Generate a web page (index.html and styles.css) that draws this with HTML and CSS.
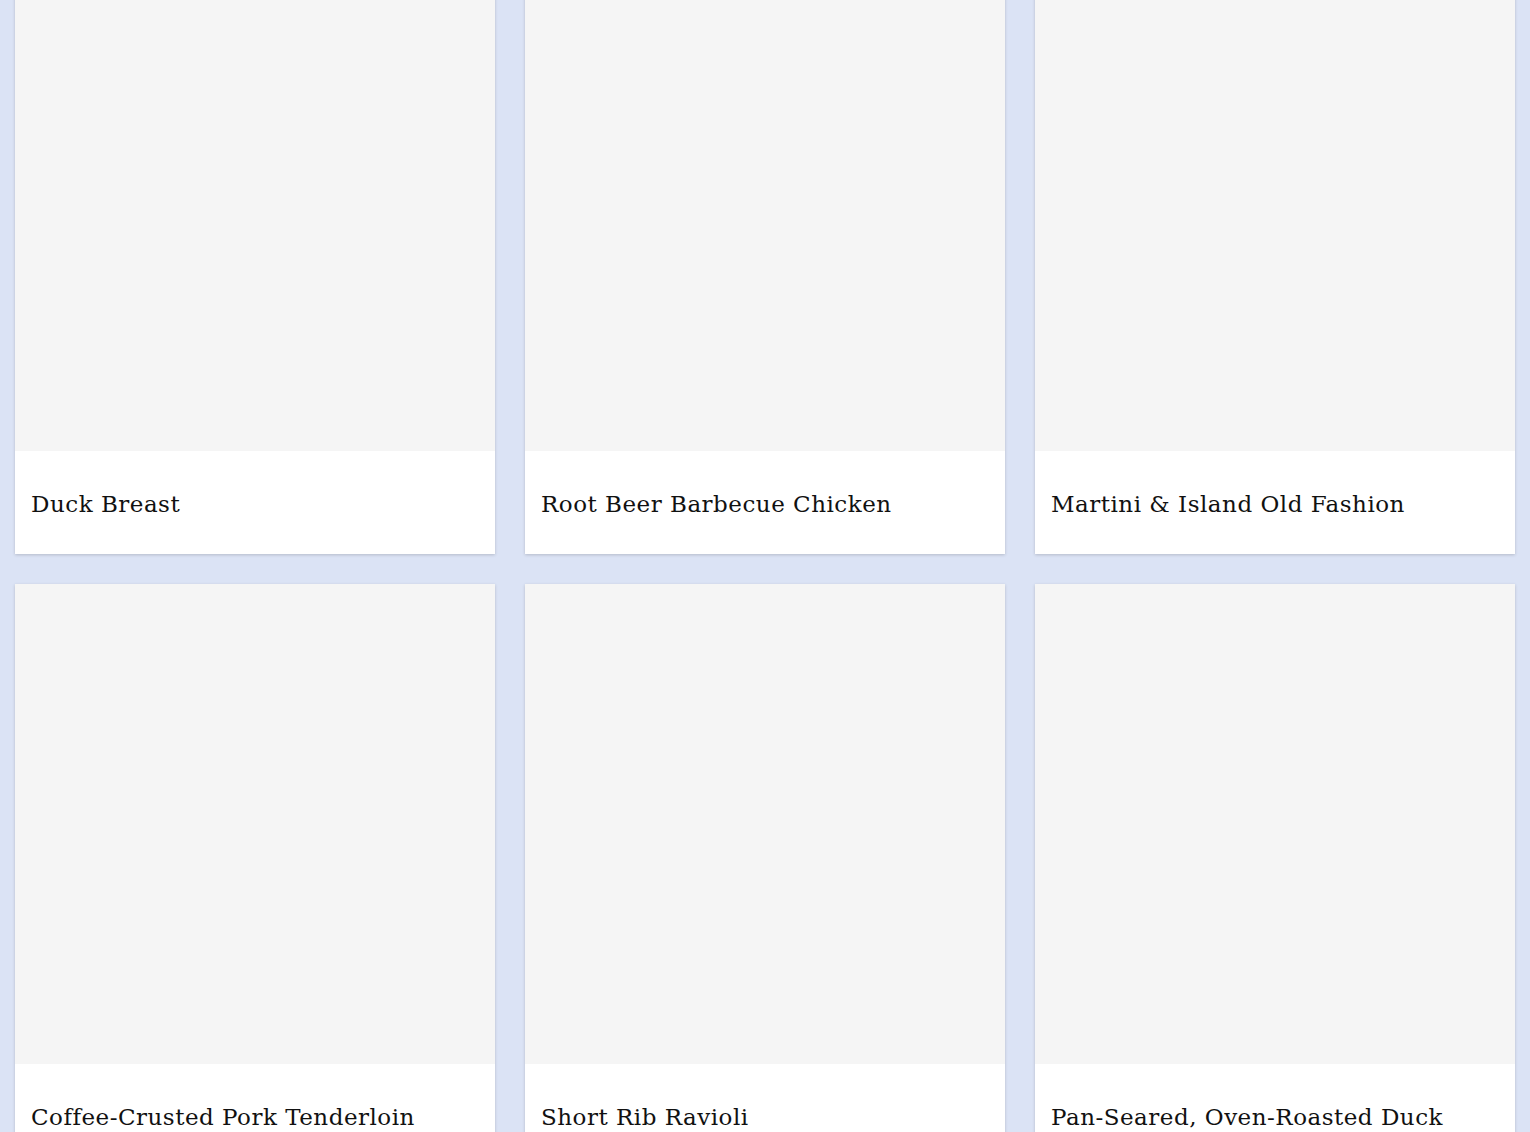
FILE: index.html
```html
<!DOCTYPE html>
<html lang="en">
<head>
<meta charset="utf-8">
<title>Recipes</title>
<link rel="stylesheet" href="styles.css">
</head>
<body>
<main class="grid">
  <article class="card"><div class="card-image"></div><div class="card-body"><h2 class="card-title">Duck Breast</h2></div></article>
  <article class="card"><div class="card-image"></div><div class="card-body"><h2 class="card-title">Root Beer Barbecue Chicken</h2></div></article>
  <article class="card"><div class="card-image"></div><div class="card-body"><h2 class="card-title">Martini &amp; Island Old Fashion</h2></div></article>
  <article class="card"><div class="card-image"></div><div class="card-body"><h2 class="card-title">Coffee-Crusted Pork Tenderloin</h2></div></article>
  <article class="card"><div class="card-image"></div><div class="card-body"><h2 class="card-title">Short Rib Ravioli</h2></div></article>
  <article class="card"><div class="card-image"></div><div class="card-body"><h2 class="card-title">Pan-Seared, Oven-Roasted Duck</h2></div></article>
</main>
</body>
</html>
```
FILE: styles.css
```css
html, body {
  margin: 0;
  padding: 0;
  background: #dbe3f5;
  overflow: hidden;
}
.grid {
  display: grid;
  grid-template-columns: repeat(3, 480px);
  gap: 30px;
  padding: 0 15px;
  margin-top: -29px;
}
.card {
  background: #fff;
  box-shadow: 0 1px 3px rgba(0, 0, 0, 0.18);
  display: flex;
  flex-direction: column;
}
.card-image {
  height: 480px;
  background: #f5f5f5;
}
.card-body {
  box-sizing: border-box;
  height: 103px;
  padding: 2px 16px 0;
  display: flex;
  align-items: center;
}
.card-title {
  margin: 0;
  font-family: "DejaVu Serif", "Liberation Serif", serif;
  font-weight: normal;
  font-size: 23px;
  color: #111;
  letter-spacing: 0.5px;
}
```
